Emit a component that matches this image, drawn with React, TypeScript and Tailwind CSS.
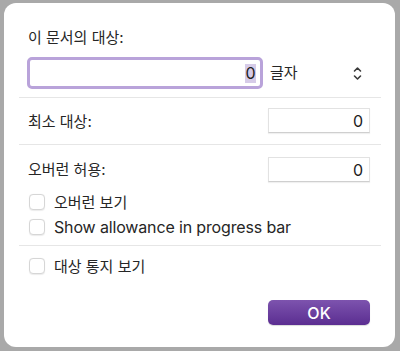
const font = { fontFamily: 'Inter, "Noto Sans CJK KR", sans-serif' };

function NumberField({ value }: { value: string }) {
  return (
    <div className="w-[102px] h-[25px] bg-white border border-[#e2e2e2] border-b-[#cfcfcf] shadow-[0_1px_1px_rgba(0,0,0,0.06)] flex items-center justify-end pr-[6px] text-[16px] text-[#222]">
      {value}
    </div>
  );
}

function Checkbox({ label, latin }: { label: string; latin?: boolean }) {
  return (
    <div className="flex items-center h-[20px] pl-[1px]">
      <div className="w-[16px] h-[16px] rounded-[4px] border border-[#d6d6d6] bg-white shadow-[0_0.5px_1px_rgba(0,0,0,0.08)]" />
      <span
        className={
          latin
            ? 'ml-[9px] text-[16px] tracking-[-0.15px] text-[#262626] leading-none'
            : 'ml-[9px] text-[15px] text-[#262626] leading-none'
        }
      >
        {label}
      </span>
    </div>
  );
}

function Separator() {
  return <div className="h-px bg-[#e6e6e6] ml-[-9px] mr-[-11px]" />;
}

export default function App() {
  return (
    <div className="w-[400px] h-[351px] bg-[#a9a9a9] pl-[4px] pt-[3px]" style={font}>
      <div className="w-[391px] h-[344px] bg-white rounded-[12px] pl-[24px] pr-[25px] pt-[25px] flex flex-col">
        <div className="h-[20px] flex items-center text-[15px] text-[#262626]">이 문서의 대상:</div>

        <div className="mt-[9px] h-[32px] flex items-center">
          <div className="ml-[-1px] w-[236px] h-[32px] rounded-[5px] border-[3px] border-[#b9a3da] bg-white flex items-center justify-end pr-[4px]">
            <span className="bg-[#d6cbe8] h-[19px] w-[11px] flex items-center justify-center text-[16px] text-[#222]">0</span>
          </div>
          <span className="ml-[7px] text-[15px] text-[#262626]">글자</span>
          <svg className="ml-auto mr-[8px]" width="9" height="15" viewBox="0 0 9 15" fill="none" stroke="#3a3a3a" strokeWidth="1.6" strokeLinecap="round" strokeLinejoin="round">
            <path d="M1.5 5 L4.5 2 L7.5 5" />
            <path d="M1.5 10 L4.5 13 L7.5 10" />
          </svg>
        </div>

        <div className="mt-[8px]"><Separator /></div>

        <div className="mt-[10px] h-[25px] flex items-center justify-between">
          <span className="text-[15px] text-[#262626] mt-[3px]">최소 대상:</span>
          <NumberField value="0" />
        </div>

        <div className="mt-[11px]"><Separator /></div>

        <div className="mt-[12px] h-[25px] flex items-center justify-between">
          <span className="text-[15px] text-[#262626] mt-[1px]">오버런 허용:</span>
          <NumberField value="0" />
        </div>

        <div className="mt-[10px]"><Checkbox label="오버런 보기" /></div>
        <div className="mt-[5px]"><Checkbox label="Show allowance in progress bar" latin /></div>

        <div className="mt-[8px]"><Separator /></div>

        <div className="mt-[10px]"><Checkbox label="대상 통지 보기" /></div>

        <div className="mt-[24px] flex justify-end">
          <button className="w-[102px] h-[25px] rounded-[5px] bg-gradient-to-b from-[#7d53ae] to-[#5b2d91] text-white text-[16px] font-medium flex items-center justify-center shadow-[0_1px_1px_rgba(0,0,0,0.15)]">
            OK
          </button>
        </div>
      </div>
    </div>
  );
}
